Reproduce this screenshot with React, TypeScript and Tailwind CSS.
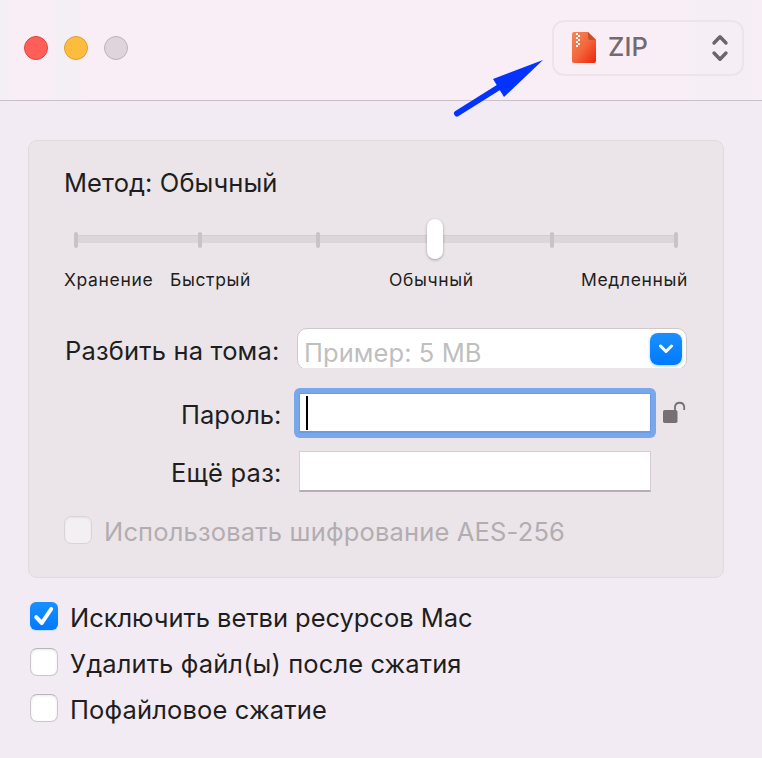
import type { ReactNode } from 'react';

function Label({ className, children }: { className: string; children: ReactNode }) {
  return <span className={`block whitespace-nowrap text-[25.5px] leading-8 ${className}`}>{children}</span>;
}

function ZipIcon() {
  return (
    <svg width="24" height="31" viewBox="0 0 24 31" className="ml-[18px] mt-[10px] shrink-0">
      <defs>
        <linearGradient id="zip" x1="0" y1="0" x2="1" y2="1">
          <stop offset="0" stopColor="#f38a59" />
          <stop offset="0.5" stopColor="#f4663c" />
          <stop offset="1" stopColor="#ee230b" />
        </linearGradient>
      </defs>
      <path d="M2 0H16L24 8V29Q24 31 22 31H2Q0 31 0 29V2Q0 0 2 0Z" fill="url(#zip)" />
      <path d="M16 0L24 8H18Q16 8 16 6Z" fill="#c9502f" />
      <path d="M4 1h2v2h-2zM6 3h2v2h-2zM4 5h2v2h-2zM6 7h2v2h-2zM4 9h2v2h-2zM6 11h2v2h-2zM4 13h2v2h-2z" fill="#fff" />
    </svg>
  );
}

function Box({ checked, disabled }: { checked?: boolean; disabled?: boolean }) {
  if (checked) {
    return (
      <span className="block h-7 w-7 shrink-0 rounded-[6px] bg-linear-to-b from-[#1a90ff] to-[#007aff] shadow-[0_1px_1px_#007aff30]">
        <svg width="28" height="28" viewBox="0 0 28 28" fill="none" stroke="#fff" strokeWidth="4" strokeLinecap="round" strokeLinejoin="round">
          <path d="M6.2 15.2L11.8 21L21.2 7" />
        </svg>
      </span>
    );
  }
  return (
    <span
      className={`block h-7 w-7 shrink-0 rounded-[7px] border ${
        disabled ? 'border-[#d9d4d8] bg-[#f3f0f3] shadow-[inset_0_1px_2px_#00000010]' : 'border-[#cdc7cd] border-t-[#bab5ba] bg-white shadow-[inset_0_1px_3px_#00000018]'
      }`}
    />
  );
}

function Tick({ className }: { className: string }) {
  return <i className={`mt-px h-4 w-1 shrink-0 rounded-[2px] bg-[#c8c3c7] ${className}`} />;
}

export default function App() {
  return (
    <div className="relative h-[758px] w-[762px] overflow-hidden bg-[#f3ebf3] font-['Inter','Liberation_Sans',sans-serif] text-[#1e1e20]">
      <header className="flex h-[101px] items-start justify-between border-b border-[#c9c1c9] bg-[linear-gradient(90deg,#f4eff5_0,#f4eff5_7px,#f9eef6_10px,#f9eef6_54px,#f4eff5_56px,#f4eff5_79px,#f9eef6_81px,#f9eef6_688px,#f5eff5_696px,#f5eff5_750px,#f8eef6_755px)] pr-[18px]">
        <div className="ml-6 mt-9 flex gap-4">
          <i className="h-6 w-6 rounded-full border border-[#e0443e] bg-[#ff5f57]" />
          <i className="h-6 w-6 rounded-full border border-[#dea035] bg-[#febc3f]" />
          <i className="h-6 w-6 rounded-full border border-[#bdb3bc] bg-[#dfd4dc]" />
        </div>
        <div className="mt-5 flex h-14 w-48 rounded-[12px] border-2 border-[#ebe4ea]">
          <ZipIcon />
          <Label className="ml-3 mt-[9px] w-[100px] font-medium tracking-[0.1px] text-[#73696f]">ZIP</Label>
          <svg width="20" height="30" viewBox="0 0 20 30" fill="none" stroke="#6d636b" strokeWidth="3.4" strokeLinecap="round" strokeLinejoin="round" className="ml-[2px] mt-[11px]">
            <path d="M4 10L10 3.8L16 10M4 20L10 26.2L16 20" />
          </svg>
        </div>
      </header>

      <main className="mx-7 mt-[39px] w-[696px]">
        <section className="h-[438px] rounded-[9px] border border-[#e0d9df] bg-[#ebe5e9] pt-[26px]">
          <Label className="ml-[35px] tracking-[0.09px]">Метод: Обычный</Label>
          <div className="ml-[45px] mt-5 flex h-10 w-[604px] items-center bg-[linear-gradient(#d3ced2,#d3ced2),linear-gradient(#dbd6da,#dbd6da)] bg-[length:600px_1px,600px_8px] bg-[position:2px_16px,2px_16px] bg-no-repeat">
            <Tick className="ml-0" />
            <Tick className="ml-[120px]" />
            <Tick className="ml-[114px]" />
            <i className="ml-[107px] h-10 w-4 shrink-0 rounded-full bg-white shadow-[0_1px_3px_#00000050]" />
            <Tick className="ml-[107px]" />
            <Tick className="ml-[120px]" />
          </div>
          <div className="mt-[9px] flex h-6 whitespace-nowrap pl-[35px] text-[17.5px] leading-6 tracking-[0.64px]">
            <span className="w-[106px] shrink-0">Хранение</span>
            <span className="w-[219px] shrink-0">Быстрый</span>
            <span className="w-[192px] shrink-0">Обычный</span>
            <span>Медленный</span>
          </div>
          <div className="mt-[36px] flex h-10">
            <Label className="ml-[36px] mt-[7px] w-[232px] shrink-0 tracking-[0.17px]">Разбить на тома:</Label>
            <div className="flex h-10 w-[390px] overflow-hidden">
              <div className="flex h-[42px] w-[390px] shrink-0 rounded-[10px] border border-[#cfc9ce] bg-white">
                <Label className="ml-[6px] mt-[8px] w-[346px] tracking-[0.07px] text-[#bfbfbf]">Пример: 5 MB</Label>
                <span className="mt-1 flex h-8 w-8 shrink-0 items-center justify-center rounded-[8px] bg-linear-to-b from-[#1a90ff] to-[#007aff] shadow-[0_1px_3px_#007aff60]">
                  <svg width="16" height="10" viewBox="0 0 16 10" fill="none" stroke="#fff" strokeWidth="3" strokeLinecap="round" strokeLinejoin="round">
                    <path d="M2.5 2L8 7.5L13.5 2" />
                  </svg>
                </span>
              </div>
            </div>
          </div>
          <div className="mt-5 flex h-[50px]">
            <Label className="ml-[152px] mt-[11px] w-[113px] shrink-0">Пароль:</Label>
            <div className="h-[50px] w-[362px] shrink-0 rounded-[6px] bg-[#78a7ec] p-[5px]">
              <div className="h-[40px] border border-b-2 border-[#6a9be6] bg-white pl-[6px] pt-[2px]">
                <i className="block h-[34px] w-0.5 bg-black" />
              </div>
            </div>
            <svg width="24" height="24" viewBox="0 0 24 24" className="ml-[6px] mt-[12px]" fill="none">
              <rect x="1" y="10" width="14.5" height="13" rx="1.8" fill="#757074" />
              <path d="M13 11V6.5A4.7 4.7 0 0 1 22.2 6.5V10" stroke="#757074" strokeWidth="1.8" />
            </svg>
          </div>
          <div className="mt-[13px] flex h-[41px]">
            <Label className="ml-[142px] mt-[6px] w-[128px] shrink-0 tracking-[0.25px]">Ещё раз:</Label>
            <div className="h-[41px] w-[352px] border border-b-2 border-[#d4ced3] border-b-[#b4afb3] bg-white" />
          </div>
          <div className="ml-[35px] mt-6 flex h-7">
            <Box disabled />
            <Label className="ml-3 tracking-[0.17px] text-[#b3adb2]">Использовать шифрование AES-256</Label>
          </div>
        </section>
        <div className="ml-0.5 mt-6 flex flex-col gap-[18px]">
          <div className="flex h-7">
            <Box checked />
            <Label className="ml-3 tracking-[-0.04px]">Исключить ветви ресурсов Mac</Label>
          </div>
          <div className="flex h-7">
            <Box />
            <Label className="ml-3 tracking-[0.12px]">Удалить файл(ы) после сжатия</Label>
          </div>
          <div className="flex h-7">
            <Box />
            <Label className="ml-3 tracking-[0.15px]">Пофайловое сжатие</Label>
          </div>
        </div>
      </main>

      <svg width="100" height="66" viewBox="450 55 100 66" className="absolute left-[450px] top-[55px]">
        <path d="M457 113.5L500 86.5" stroke="#0433ff" strokeWidth="6" strokeLinecap="round" />
        <path d="M543 60L493 79L504 97Z" fill="#0433ff" />
      </svg>
    </div>
  );
}
